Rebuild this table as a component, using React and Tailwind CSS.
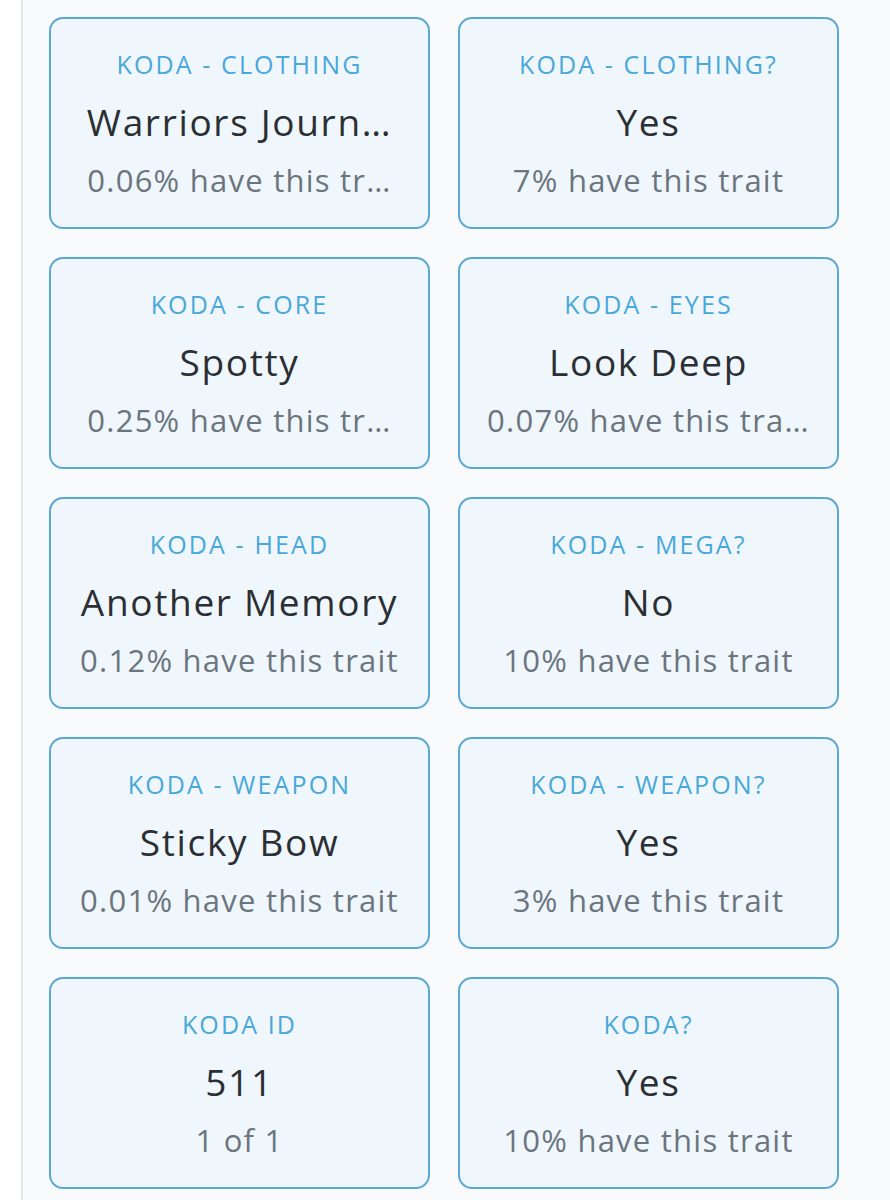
const traits = [
  { label: 'KODA - CLOTHING', value: 'Warriors Journ…', note: '0.06% have this tr…' },
  { label: 'KODA - CLOTHING?', value: 'Yes', note: '7% have this trait' },
  { label: 'KODA - CORE', value: 'Spotty', note: '0.25% have this tr…' },
  { label: 'KODA - EYES', value: 'Look Deep', note: '0.07% have this tra…' },
  { label: 'KODA - HEAD', value: 'Another Memory', note: '0.12% have this trait' },
  { label: 'KODA - MEGA?', value: 'No', note: '10% have this trait' },
  { label: 'KODA - WEAPON', value: 'Sticky Bow', note: '0.01% have this trait' },
  { label: 'KODA - WEAPON?', value: 'Yes', note: '3% have this trait' },
  { label: 'KODA ID', value: '511', note: '1 of 1' },
  { label: 'KODA?', value: 'Yes', note: '10% have this trait' },
];

function TraitCard({ label, value, note }) {
  return (
    <div className="flex h-[212px] flex-col items-center rounded-[14px] border-2 border-[#5aa8d3] bg-[#eff7fd] pt-[28px] text-center">
      <div className="whitespace-nowrap text-[25px] leading-[34px] tracking-[0.085em] uppercase text-[#4aa7da]">{label}</div>
      <div className="mt-[18px] whitespace-nowrap text-[37px] leading-[46px] tracking-[0.045em] font-medium text-[#2b2f33]">{value}</div>
      <div className="mt-[14px] whitespace-nowrap text-[31px] leading-[42px] tracking-[0.04em] text-[#6c757d]">{note}</div>
    </div>
  );
}

export default function App() {
  return (
    <div className="flex min-h-[1200px] bg-white" style={{ fontFamily: '"Open Sans", sans-serif' }}>
      <div className="w-[21px] shrink-0 bg-white" />
      <div className="w-[2px] shrink-0 bg-[#e4e6e8]" />
      <main className="flex-1 bg-[#f8fafc] pl-[26px] pr-[51px] pt-[17px]">
        <div className="grid grid-cols-2 gap-x-[28px] gap-y-[28px]">
          {traits.map((t) => (
            <TraitCard key={t.label} {...t} />
          ))}
        </div>
      </main>
    </div>
  );
}
